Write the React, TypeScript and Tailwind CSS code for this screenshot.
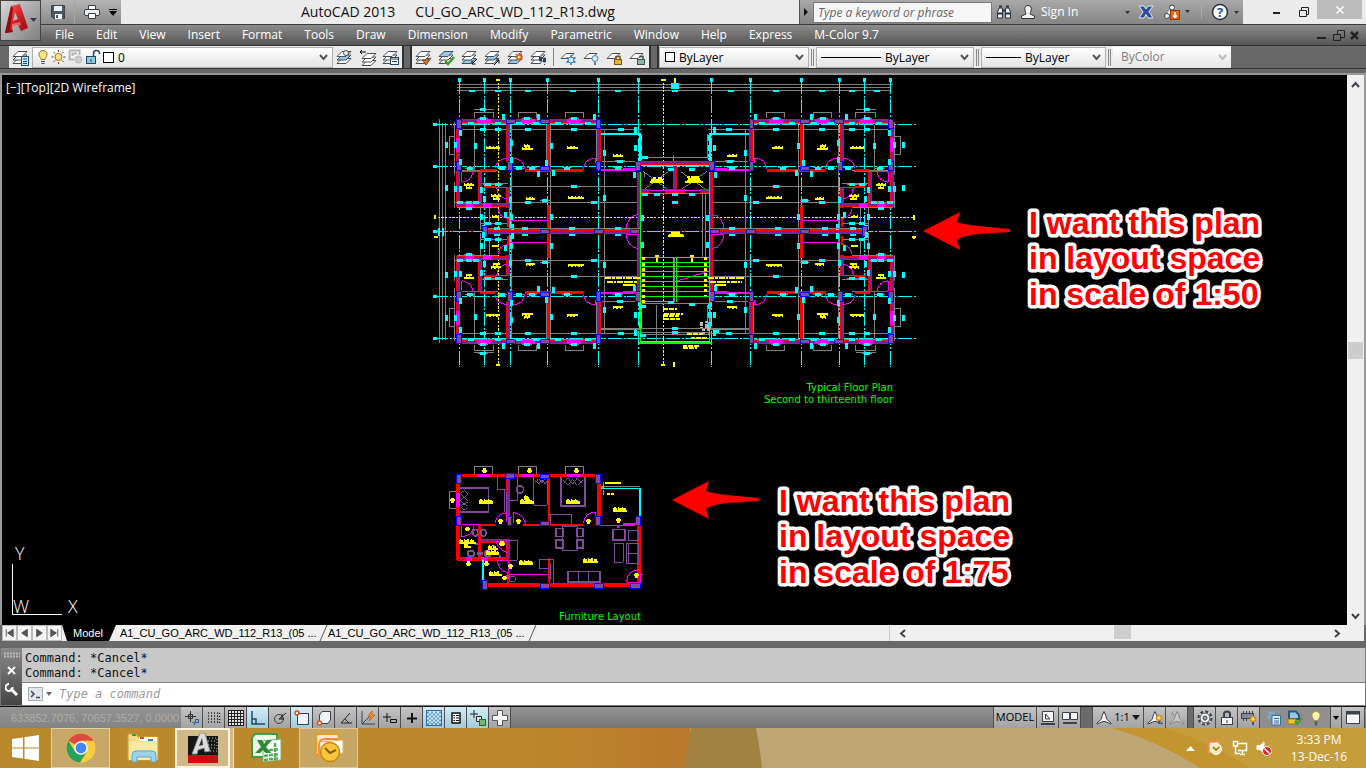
import React from "react";

type P = { children?: React.ReactNode };
type Pt = [number, number];

/* ---------- small icon helpers ---------- */

function Ico({ w = 16, h = 16, children }: P & { w?: number; h?: number }) {
  return (
    <svg width={w} height={h} viewBox={`0 0 ${w} ${h}`} fill="none" stroke="#3b424c" strokeWidth="1" className="shrink-0" aria-hidden="true">
      {children}
    </svg>
  );
}

function Sheets({ top = "#fff", mid = "#fff", low = "#fff", tint = "#4a4f57" }) {
  return (
    <g stroke={tint} strokeWidth="1">
      <path d="M6 9.5H15L10 14.5H1Z" fill={low} />
      <path d="M6 6H15L10 11H1Z" fill={mid} />
      <path d="M6 2.5H15L10 7.5H1Z" fill={top} />
    </g>
  );
}

function Sheet() {
  return <path d="M6 4.5H14L9 9.5H1Z" fill="#fff" stroke="#4a4f57" />;
}

function IcoBtn({ label, children, cls = "w-[23px]" }: P & { label: string; cls?: string }) {
  return (
    <button type="button" aria-label={label} title={label} className={`flex h-full items-center justify-center ${cls}`}>
      {children}
    </button>
  );
}

function Chevron({ color = "#555" }) {
  return (
    <svg width="9" height="7" viewBox="0 0 9 7" fill="none" stroke={color} strokeWidth="2" className="pointer-events-none mr-1 -ml-3 shrink-0" aria-hidden="true">
      <path d="M1 1L4.500 5L8 1" />
    </svg>
  );
}

/* ---------- header ---------- */

function Logo() {
  return (
    <button type="button" aria-label="Application menu" className="flex h-[41px] w-[41px] shrink-0 items-center border border-[#444] bg-gradient-to-br from-[#d8d8d8] via-[#aaa] to-[#808080]">
      <svg width="39" height="39" viewBox="0 0 39 39" aria-hidden="true">
        <defs>
          <linearGradient id="lg" x1="0" y1="0" x2="1" y2="1">
            <stop offset="0" stopColor="#f46a62" />
            <stop offset="0.500" stopColor="#d91f26" />
            <stop offset="1" stopColor="#8f0d12" />
          </linearGradient>
        </defs>
        <path d="M4 32L10 5L19 3L27 27L20 30L17 24L11 26L12 31Z" fill="url(#lg)" />
        <path d="M4 32L10 5L12 7L9 28L12 31Z" fill="#8f0d12" />
        <path d="M12 20L14 11L17 18Z" fill="#bcb0b0" />
        <path d="M11 23L19 21L20 24L11 26Z" fill="#fff" opacity="0.350" />
        <path d="M29 17H36L32.500 21Z" fill="#333b4a" />
      </svg>
    </button>
  );
}

function TitleBar() {
  return (
    <div className="flex h-[24px] items-stretch bg-[#ebebeb]">
      <div className="flex w-[80px] items-center bg-gradient-to-b from-[#b4b4b4] to-[#8a8a8a]">
        <IcoBtn label="Save" cls="w-[34px] border-r border-[#a5a5a5]">
          <Ico>
            <path d="M2 1.500H14.500V14.500H3.500L1.500 12.500V1.500Z" fill="#4d5866" />
            <rect x="4" y="2" width="8" height="5" fill="#e8f0f6" stroke="none" />
            <rect x="5" y="10" width="7" height="5" fill="#fff" stroke="none" />
            <rect x="6" y="11" width="2" height="3" fill="#4d5866" stroke="none" />
          </Ico>
        </IcoBtn>
        <IcoBtn label="Print" cls="w-[34px]">
          <Ico>
            <path d="M4.500 6V1.500H11.500V6" fill="#fff" />
            <rect x="0.500" y="5.500" width="15" height="6" rx="1.500" fill="#eee" />
            <path d="M4.500 9.500H11.500V14.500H4.500Z" fill="#fff" />
          </Ico>
        </IcoBtn>
        <button type="button" aria-label="Customize quick access" className="h-full">
          <svg width="8" height="7" viewBox="0 0 8 7" aria-hidden="true"><path d="M0 0H8V1H0ZM0 2H8L4 7Z" fill="#000" /></svg>
        </button>
      </div>
      <h1 className="flex flex-1 items-center gap-[20px] whitespace-nowrap pl-[180px] text-[14px] leading-6 text-[#111]">
        <span>AutoCAD 2013</span>
        <span>CU_GO_ARC_WD_112_R13.dwg</span>
      </h1>
      <div className="flex w-[444px] shrink-0 items-center border-l border-[#555] bg-gradient-to-b from-[#a8a8a8] to-[#858585]">
        <svg width="13" height="10" viewBox="0 0 13 10" aria-hidden="true"><path d="M4 1V9L8 5Z" fill="#111" /></svg>
        <input aria-label="Search help" placeholder="Type a keyword or phrase" className="h-[21px] w-[179px] border border-[#777] bg-[#f6f6f6] px-1 text-[12px] italic text-black placeholder:text-[#666]" />
        <IcoBtn label="Search" cls="w-[24px]">
          <Ico>
            <path d="M3 4H6.500V14H1.500V8ZM13 4H9.500V14H14.500V8Z" fill="#e6edf2" stroke="#2c333d" />
            <path d="M3 2.500H6M10 2.500H13M6.500 6.500H9.500M2 9.500H6M10 9.500H14" stroke="#2c333d" strokeWidth="2" />
          </Ico>
        </IcoBtn>
        <button type="button" className="flex h-full flex-1 items-center gap-[5px] pl-1 text-[12px] text-white">
          <Ico>
            <path d="M8 1.500C5 1.500 4.500 4 5 6C5.300 8 6 9 6 10L1.500 12V14.500H14.500V12L10 10C10 9 11 8 11.200 6C11.500 4 11 1.500 8 1.500Z" fill="#f2f2f2" stroke="#2c333d" />
          </Ico>
          <span className="flex-1 text-left">Sign In</span>
          <svg width="5" height="5" viewBox="0 0 5 5" aria-hidden="true"><path d="M0 1H5L2.500 4Z" fill="#333" /></svg>
        </button>
        <IcoBtn label="Exchange apps" cls="w-[32px]">
          <Ico>
            <path d="M1 2H6L8 5L10 2H15L11 7.500L15 14H10L8 10.500L6 14H1L5 8Z" fill="#2f4f9e" stroke="#dfe6f5" />
          </Ico>
        </IcoBtn>
        <IcoBtn label="Stay connected" cls="w-[20px]">
          <Ico>
            <path d="M8 4L3 12H13" stroke="#fff" strokeWidth="2" />
            <circle cx="8" cy="3.500" r="2.500" fill="#fff" />
            <circle cx="3" cy="12" r="2.500" fill="#fff" />
            <rect x="6.500" y="6.500" width="9" height="9" fill="#e2661a" stroke="#8d3a07" />
            <path d="M11 8V13M9 11.500L11 13.500L13 11.500" stroke="#fff" strokeWidth="1.500" />
          </Ico>
        </IcoBtn>
        <svg width="28" height="16" viewBox="0 0 28 16" aria-hidden="true"><path d="M3 6H8L5.500 9Z" fill="#333" /><path d="M19.500 1V15" stroke="#aaa" /></svg>
        <IcoBtn label="Help" cls="w-[20px]">
          <Ico w={18} h={18}>
            <circle cx="9" cy="9" r="7.500" fill="#fff" stroke="#2c333d" strokeWidth="1.500" />
            <text x="9" y="13.500" textAnchor="middle" fill="#1d4fa0" stroke="none" className="text-[13px] font-bold">?</text>
          </Ico>
        </IcoBtn>
        <svg width="13" height="5" viewBox="0 0 13 5" aria-hidden="true"><path d="M4 1H9L6.500 4Z" fill="#333" /></svg>
      </div>
      <div className="flex w-[123px] shrink-0 items-start">
        <IcoBtn label="Minimize" cls="ml-[20px] w-[28px]"><Ico w={10} h={10}><path d="M1 6H8" stroke="#222" strokeWidth="2" /></Ico></IcoBtn>
        <IcoBtn label="Restore" cls="w-[26px]"><Ico w={11} h={13}><path d="M0.500 4.500H7.500V10.500H0.500ZM2.500 4V1.500H9.500V8.500H8" stroke="#222" /></Ico></IcoBtn>
        <button type="button" aria-label="Close" className="flex h-[19px] w-[45px] items-center justify-center bg-[#bcbcbc]">
          <Ico w={8} h={8}><path d="M0.500 0.500L7.500 7.500M7.500 0.500L0.500 7.500" stroke="#fff" strokeWidth="1.500" /></Ico>
        </button>
      </div>
    </div>
  );
}

const menus = ["File", "Edit", "View", "Insert", "Format", "Tools", "Draw", "Dimension", "Modify", "Parametric", "Window", "Help", "Express", "M-Color 9.7"];

function MenuBar() {
  return (
    <nav className="flex h-[21px] items-center border-t border-[#3c3c3c] bg-gradient-to-b from-[#8d8d8d] to-[#555] pr-1 pl-[14px]">
      <div className="flex flex-1 items-center gap-[22px] text-[12px] leading-5 text-white">
        {menus.map((m) => <button type="button" key={m}>{m}</button>)}
      </div>
      <IcoBtn label="Minimize drawing" cls="w-[17px]"><Ico w={10} h={10}><path d="M0 8H9" stroke="#222" strokeWidth="2" /></Ico></IcoBtn>
      <IcoBtn label="Restore drawing" cls="w-[17px]"><Ico w={12} h={11}><path d="M0.500 4.500H7.500V10.500H0.500ZM4.500 4V0.500H11.500V7.500H8" stroke="#222" /></Ico></IcoBtn>
      <IcoBtn label="Close drawing" cls="w-[15px]"><Ico w={9} h={9}><path d="M1 1L8 8M8 1L1 8" stroke="#222" strokeWidth="2.500" /></Ico></IcoBtn>
    </nav>
  );
}

function Grip() {
  return <div className="h-full w-[10px] border-x-2 border-[#333] bg-[#686868]" />;
}

function DoubleRule() {
  return <div className="mx-[2px] h-[17px] w-[3px] border-x border-[#888]" />;
}

function Combo({ label, value, cls, icon, dim = false }: { label: string; value: string; cls: string; icon?: React.ReactNode; dim?: boolean }) {
  return (
    <div className={`flex h-[21px] shrink-0 items-center border border-[#b0b0b0] bg-gradient-to-b from-white to-[#e4e4e4] pl-1 ${cls}`}>
      {icon}
      <select aria-label={label} disabled={dim} className={`h-full min-w-0 flex-1 appearance-none bg-transparent pl-1 text-[12px] leading-5 ${dim ? "text-[#808080]" : "text-black"}`}>
        <option>{value}</option>
      </select>
      <Chevron color={dim ? "#bbb" : "#555"} />
    </div>
  );
}

function Swatch() {
  return <span className="ml-px h-[10px] w-[10px] shrink-0 border border-black bg-white" />;
}

function Toolbars() {
  return (
    <div className="flex h-[24px] items-center border-y border-[#333] bg-[#686868] pl-[9px]">
      <div className="flex h-full shrink-0 items-center bg-[#ebebeb]">
        <IcoBtn label="Layer properties"><Ico w={17} h={17}><Sheets /><rect x="9.500" y="7.500" width="7" height="9" fill="#cfe6f7" stroke="#1b4f80" /><path d="M11 10H15M11 12.500H15M11 14.500H15" stroke="#1b4f80" /></Ico></IcoBtn>
        <Combo
          label="Layer"
          value="0"
          cls="w-[301px]"
          icon={
            <span className="flex items-center gap-[1px]">
              <Ico w={12} h={16}><path d="M6 1.500C3 1.500 1.500 4 2 6C2.500 8 4 9 4 10.500H8C8 9 9.500 8 10 6C10.500 4 9 1.500 6 1.500Z" fill="#fbe38a" stroke="#98762a" /><path d="M4 12.500H8M4.500 14.500H7.500" stroke="#445" /></Ico>
              <Ico w={17} h={16}><circle cx="8.500" cy="8" r="3.500" fill="#fbe38a" stroke="#a8762a" /><path d="M8.500 1V3M8.500 13V15M1.500 8H3.500M13.500 8H15.500M3.500 3L5 4.500M12 11.500L13.500 13M13.500 3L12 4.500M5 11.500L3.500 13" stroke="#6a4b18" /></Ico>
              <Ico w={15} h={16}><path d="M1.500 1.500H11.500V6M6 10.500H1.500V1.500M4.500 7V4.500H9" stroke="#b4b4b4" strokeWidth="2" /><circle cx="10.500" cy="10.500" r="3.500" fill="#ccc" stroke="#aaa" strokeDasharray="2 1" /></Ico>
              <Ico w={18} h={16}><rect x="2.500" y="7.500" width="9" height="7" fill="#8cc8e0" stroke="#24485e" /><path d="M9.500 7V4.500Q9.500 1.500 12.500 1.500T15.500 5" stroke="#24485e" strokeWidth="1.500" /><path d="M7 10V13" stroke="#24485e" /></Ico>
              <span className="h-[11px] w-[11px] border border-black bg-white" />
            </span>
          }
        />
        <IcoBtn label="Make current"><Ico w={17} h={17}><Sheets mid="#8ec9ee" /><circle cx="10" cy="4" r="2.500" stroke="#555" fill="#eee" /></Ico></IcoBtn>
        <IcoBtn label="Layer previous"><Ico w={17} h={17}><g transform="translate(2 2)"><Sheets /></g><path d="M1 3H7M1 3L3 1M1 3L3 5" stroke="#000" /></Ico></IcoBtn>
        <IcoBtn label="Layer states"><Ico w={17} h={17}><Sheets /><rect x="8.500" y="8.500" width="8" height="7" fill="#fff" stroke="#24485e" /><path d="M8 10H17M10 12.500H15" stroke="#24485e" /></Ico></IcoBtn>
      </div>
      <Grip />
      <div className="flex h-full shrink-0 items-center bg-[#ebebeb]">
        <IcoBtn label="Layer match"><Ico w={17} h={17}><Sheets /><path d="M7 11L11 16L16 9L11 11Z" fill="#c7742c" stroke="#8a4513" /></Ico></IcoBtn>
        <IcoBtn label="Change to current layer"><Ico w={17} h={17}><Sheets top="#8ec9ee" /><path d="M7 12L10 15L16 8" stroke="#3f9e28" strokeWidth="2.500" /></Ico></IcoBtn>
        <IcoBtn label="Copy to layer"><Ico w={17} h={17}><Sheets low="#8ec9ee" /><path d="M16 10L11 15M11 11.500V15H14.500" stroke="#000" /></Ico></IcoBtn>
        <IcoBtn label="Layer walk"><Ico w={17} h={17}><Sheets mid="#8ec9ee" /><path d="M10 16L15 11M11.500 11H15V14.500" stroke="#000" /></Ico></IcoBtn>
        <IcoBtn label="Layer isolate"><Ico w={17} h={17}><Sheets low="#8ec9ee" /><path d="M12 4V12M8 8H16M9 5L15 11M15 5L9 11" stroke="#d5531a" strokeWidth="1.500" /><circle cx="12" cy="8" r="1.500" fill="#ffec8a" stroke="none" /></Ico></IcoBtn>
        <IcoBtn label="Layer unisolate"><Ico w={17} h={17}><Sheets /><path d="M9.500 8H11.500V12H9.500ZM13.500 9H15.500V13H13.500ZM10 14V15M14.500 15V16" fill="#24406b" stroke="#24406b" /></Ico></IcoBtn>
        <div className="mx-[3px] h-[18px] w-px bg-[#888]" />
        <IcoBtn label="Layer freeze"><Ico w={17} h={17}><Sheet /><path d="M11 6V16M6.500 8.500L15.500 13.500M15.500 8.500L6.500 13.500" stroke="#2c79b8" strokeWidth="1.500" /><circle cx="11" cy="11" r="3" fill="#d8effa" stroke="#2c79b8" /></Ico></IcoBtn>
        <IcoBtn label="Layer off"><Ico w={17} h={17}><Sheet /><circle cx="12" cy="9.500" r="3" fill="#cfeafc" stroke="#5b87a3" /><path d="M11 13H13V16H11Z" fill="#5b87a3" stroke="none" /></Ico></IcoBtn>
        <IcoBtn label="Layer lock"><Ico w={17} h={17}><Sheet /><rect x="8.500" y="10.500" width="7" height="5" fill="#e4b43a" stroke="#7a5414" /><path d="M10 10V7.500H14V10" stroke="#7a5414" strokeWidth="1.500" /></Ico></IcoBtn>
        <IcoBtn label="Layer unlock"><Ico w={17} h={17}><Sheet /><rect x="8.500" y="10.500" width="7" height="5" fill="#8fb3a5" stroke="#35564a" /><path d="M14 10V7.500H11V8.500" stroke="#35564a" strokeWidth="1.500" /></Ico></IcoBtn>
      </div>
      <Grip />
      <div className="flex h-full shrink-0 items-center bg-[#ebebeb]">
        <Combo label="Color" value="ByLayer" cls="w-[150px]" icon={<Swatch />} />
        <DoubleRule />
        <Combo label="Linetype" value="ByLayer" cls="w-[158px]" icon={<span className="h-px w-[60px] shrink-0 bg-black" />} />
        <DoubleRule />
        <Combo label="Lineweight" value="ByLayer" cls="w-[125px]" icon={<span className="h-px w-[35px] shrink-0 bg-black" />} />
        <DoubleRule />
        <Combo label="Plot style" value="ByColor" cls="w-[118px] border-0" dim />
      </div>
    </div>
  );
}

/* ---------- drawings: coordinates are thirds of a pixel ---------- */

const GRAY = "#808080";
const CYAN = "#00ffff";
const YEL = "#ffff00";
const MAG = "#ff00ff";

function Wall({ d, w = 12, core = 6 }: { d: string; w?: number; core?: number }) {
  return (
    <>
      <path d={d} stroke="#ff0000" strokeWidth={w} />
      <path d={d} stroke="#7d1f9c" strokeWidth={core} />
    </>
  );
}

function Column({ c, w, h }: { c: Pt; w: number; h: number }) {
  return <rect x={c[0] - w / 2} y={c[1] - h / 2} width={w} height={h} fill="#804b9b" stroke="#0000ff" strokeWidth="3" />;
}

function Label({ x, y, w = 30 }: { x: number; y: number; w?: number }) {
  return (
    <g stroke={YEL}>
      <path d={`M${x - w / 2} ${y}h${w}`} strokeWidth="6" />
      <path d={`M${x - w / 2} ${y - 4}h${w - 6}`} strokeWidth="3" strokeDasharray="4 5 7 4" />
    </g>
  );
}

const hTags: Pt[] = [[158, 130], [292, 130], [432, 130], [124, 145], [205, 145], [268, 145], [318, 145], [385, 145], [475, 145], [160, 163], [203, 163], [295, 163], [431, 163], [572, 163], [120, 281], [215, 279], [268, 281], [307, 279], [410, 279], [563, 279], [570, 258], [431, 335], [175, 328], [205, 328], [160, 104], [90, 382], [116, 382], [138, 382], [295, 382], [492, 382], [345, 377], [118, 399], [175, 446], [205, 446], [202, 477], [285, 477], [427, 477], [563, 477]];
const vTags: Pt[] = [[49, 210], [49, 340], [77, 210], [91, 175], [91, 260], [135, 212], [244, 205], [364, 213], [350, 265], [523, 235], [220, 125], [325, 125], [494, 125], [325, 297], [370, 295], [244, 255], [617, 166], [617, 218], [630, 190], [630, 218], [630, 245], [75, 342], [91, 342], [155, 345], [163, 372], [364, 427], [523, 370], [226, 420], [245, 427], [155, 425], [160, 458], [247, 455], [636, 428], [240, 375], [614, 300]];

const stubs = "M95 163H635M240 334H622M240 382H622M240 382V467M135 150V290M244 150V460M363 150V465M523 165V470M80 398H205M515 259H622M75 140V300M75 320V400M178 400V450M153 400V465M153 325H235M153 446H235M78 288H205M350 150V280M500 150V280M636 177V250M170 477H630M95 145H500M155 290V320";

function Quarter({ balcony = CYAN }: { balcony?: string }) {
  return (
    <g>
      <path d={stubs} stroke={GRAY} strokeWidth="3" />
      <path d="M133 130V112H192V130M265 130V112H320V130M407 130V112H461V130M75 184H58V238H75M132 105H192" stroke={GRAY} strokeWidth="3" />
      <Wall d="M80 137H510M83 135V395M78 391H240M149 288V392M235 148V262M235 335V400M508 150V262M170 469H630M627 290V470" />
      <path d="M356 148V275M285 286H460M150 286H195M163 336H198M356 390V465" stroke="#ff0000" strokeWidth="8" />
      <path d="M235 430V455" stroke="#ff0000" strokeWidth="6" />
      <path d="M140 137H182M272 137H314M411 137H453M83 190V232M105 391H128M158 391H182" stroke={MAG} strokeWidth="12" />
      <path d="M512 285H615" stroke={MAG} strokeWidth="5" />
      <path d="M580 285H615" stroke={MAG} strokeWidth="9" />
      <path d="M240 436H355M195 280Q198 252 232 250M285 282Q280 250 248 250M460 282Q464 250 497 250V265M95 290V322Q126 318 128 290M198 290H95M232 337H200Q202 368 232 372M205 402Q208 428 232 430M232 337H205M589 460Q590 424 625 418M589 460H628" stroke={MAG} strokeWidth="3" />
      <path d="M512 177H632M630 177V258" stroke={balcony} strokeWidth="5" />
      {[[87, 147], [505, 147], [87, 274], [240, 274], [505, 274], [624, 274], [165, 469]].map(([x, y]) => <Column key={`${x}-${y}`} c={[x, y]} w={13} h={28} />)}
      {[[242, 140], [344, 140], [345, 281], [346, 469], [507, 469], [616, 469]].map(([x, y]) => <Column key={`${x}-${y}`} c={[x, y]} w={27} h={13} />)}
      {hTags.map(([x, y], i) => (
        <g key={i}>
          <path d={`M${x - 15} ${y}h30`} stroke={GRAY} strokeWidth="3" />
          <rect x={x - 9} y={y - 4} width="18" height="9" fill={CYAN} />
        </g>
      ))}
      {vTags.map(([x, y], i) => <rect key={i} x={x - 4} y={y - 9} width="9" height="18" fill={CYAN} />)}
      <Label x={189} y={219} w={42} />
      <Label x={292} y={221} w={34} />
      <Label x={290} y={213} w={18} />
      <Label x={427} y={219} w={34} />
      <Label x={564} y={243} w={30} />
      <Label x={117} y={331} w={32} />
      <Label x={117} y={338} w={20} />
      <Label x={198} y={362} w={30} />
      <Label x={200} y={371} w={22} />
      <Label x={301} y={372} w={28} />
      <Label x={438} y={368} w={48} />
      <Label x={196} y={427} w={22} />
    </g>
  );
}

const gridX = [88, 163, 241, 352, 505, 625, 844, 961, 1114, 1228, 1303, 1381];
const gridY = [148, 274, 469, 664, 790];

function FloorPlan() {
  return (
    <g transform="translate(430 75) scale(0.333333)" fill="none" shapeRendering="crispEdges">
      <path d="M82 28H1390M82 38H1384M82 47H1384M28 133V805M37 145V795M48 145V795" stroke={GRAY} strokeWidth="3" />
      {gridX.map((x) => <path key={x} d={`M${x} 15V876`} stroke={CYAN} strokeWidth="3" strokeDasharray="42 5 6 5" />)}
      {gridY.map((y) => <path key={y} d={`M12 ${y}H1458`} stroke={CYAN} strokeWidth="3" strokeDasharray="42 5 6 5" />)}
      <path d="M205 12V872M700 12V872M12 427H1452" stroke={YEL} strokeWidth="3" strokeDasharray="7 4" />
      {gridX.map((x) => <rect key={x} x={x - 5} y="10" width="10" height="10" fill={CYAN} />)}
      {gridY.map((y) => <rect key={y} x="10" y={y - 5} width="10" height="10" fill={CYAN} />)}
      <path d="M198 15h12M694 15h14M198 870h12M694 870h12M735 10v15M733 862v13M15 420v13M12 486h12M1452 420v14M1445 487h14M1452 482v10" stroke={YEL} strokeWidth="7" />
      {[126, 205, 295, 429, 565, 735, 903, 1039, 1175, 1266, 1342].map((x) => <rect key={x} x={x - 9} y="45" width="18" height="6" fill={CYAN} />)}
      <rect x="723" y="24" width="24" height="18" fill={CYAN} />
      <path d="M28 460v22M39 460v22" stroke={CYAN} strokeWidth="7" />
      <Quarter />
      <g transform="translate(1470 0) scale(-1 1)"><Quarter /></g>
      <g transform="translate(0 939) scale(1 -1)"><Quarter balcony={GRAY} /></g>
      <g transform="translate(1470 939) scale(-1 -1)"><Quarter balcony={GRAY} /></g>

      {/* lift and stair core */}
      <path d="M632 248H838M632 357H838M645 305V290M640 290L715 345M640 345L715 290M752 290L830 345M752 345L830 290M818 357V546M826 357V546M632 455V540M632 687H838M632 760H838M632 772H838M632 780H838M680 690V800M730 240V290" stroke={GRAY} strokeWidth="3" />
      <Wall d="M630 265H840M735 265V350M628 349H658M706 349H765M810 349H838" />
      <path d="M632 272H838M630 800H840" stroke={CYAN} strokeWidth="4" />
      <path d="M660 347H810M742 618L825 592" stroke={MAG} strokeWidth="3" />
      <path d="M631 290V805M838 290V805M631 547H838M631 562H838M631 576H838M631 590H838M631 604H838M631 619H838M631 634H838M631 649H838M631 664H838M631 679H730" stroke="#00ff00" strokeWidth="3" />
      <path d="M731 547V680M739 547V680" stroke="#00ff00" strokeWidth="4" />
      <path d="M735 547V680" stroke={GRAY} strokeWidth="3" />
      <path d="M628 805H845" stroke="#00ff00" strokeWidth="5" />
      <path d="M640 547V690M828 547V664" stroke={YEL} strokeWidth="9" strokeDasharray="9 7" />
      <path d="M526 608H632M530 620H620M835 608H942M840 620H935" stroke={YEL} strokeWidth="6" strokeDasharray="18 3 8 2" />
      <path d="M578 629h36M855 629h32M674 542h12M682 542v20M780 542h12M785 542v20" stroke={YEL} strokeWidth="6" />
      <path d="M668 310h10m6 0h12M664 316h36M660 321h42M770 306h10m4 0h22M775 313h34M770 318h42M766 322h52M716 479h42M714 484h48M722 475h28" stroke={YEL} strokeWidth="5" />
      <path d="M700 701h40M703 716h55M700 724h46M703 733h50M772 777h50M782 788h50M758 812h50M760 820h42" stroke={YEL} strokeWidth="6" strokeDasharray="14 3" />
      <path d="M815 740v18M830 738v20M822 763v14M837 755v14" stroke="#b8b8b8" strokeWidth="9" strokeDasharray="6 2" />
      {[[645, 248], [645, 358], [680, 358], [735, 358], [735, 382], [787, 358], [722, 283], [787, 283], [735, 760], [735, 772], [722, 683], [787, 688], [638, 782], [640, 694], [857, 770]].map(([x, y], i) => <rect key={i} x={x - 9} y={y - 4} width="18" height="9" fill={CYAN} />)}
    </g>
  );
}

function FurniturePlan() {
  return (
    <g transform="translate(440 460) scale(0.333333)" fill="none" shapeRendering="crispEdges">
      <path d="M103 42V19H157V42M235 42V19H290V42M376 42V19H430V42M50 94H28V146H50M482 80H600" stroke={GRAY} strokeWidth="3" />
      <Wall w={11} core={3} d="M55 47H475M54 47V300M50 298H208M119 195V298M122 243H208M205 50V170M478 50V170M598 195V375M130 376H600M205 243V298" />
      <path d="M327 50V185M250 194H430M122 194H165M327 294V375M205 335V375" stroke="#ff0000" strokeWidth="6" />
      <path d="M110 47H150M243 47H282M381 47H424M54 98V140M78 298H96M124 298H142M205 345V358" stroke={MAG} strokeWidth="11" />
      <path d="M55 195H122M66 195V230Q98 228 102 198M165 190Q170 160 201 158V185M220 190V158Q250 160 257 194M430 190Q434 158 466 157V190M484 196H585M172 302H205V338Q176 334 172 302M208 343H325M168 246Q178 272 204 278M168 246H204M560 366Q562 332 598 328M602 340V368H560M598 343h11" stroke={MAG} strokeWidth="3" />
      <path d="M550 192H585M535 196v8" stroke={MAG} strokeWidth="6" />
      <path d="M484 86H600V170" stroke={CYAN} strokeWidth="5" />
      <path d="M129 300V360" stroke={CYAN} strokeWidth="6" />
      <g stroke="#804b9b" strokeWidth="3">
        <path d="M60 85H146V155H60M172 52V88H205M195 88V157M200 100V157M208 121H233V52M281 52V136H322V52M331 192V163H395V192M367 199H413V271H367ZM298 325V298H340V370M327 325H298M208 241H232V301H208" />
        <path d="M60 83H146M60 156H146" strokeWidth="5" />
        <path d="M362 50V138H436V50M362 138H436" strokeWidth="6" />
        <path d="M349 206H370V230H349ZM349 240H370V265H349ZM410 206H430V230H410ZM410 240H430V265H410Z" strokeWidth="5" />
        <path d="M520 209H556V241H520ZM384 335H480V367H384Z" strokeWidth="5" />
        <path d="M565 211H595V241H565ZM523 250H550V307H523ZM559 250H595V312H559ZM559 280H595M416 335V365M446 335V365M565 250V312M333 310V360M210 350H226V364H210Z" />
        <path d="M62 100L73 91L85 102L73 114ZM62 122L73 111L85 124L73 135ZM62 140L73 130L85 140L73 150ZM286 60L296 72L306 60L316 72L322 60M286 68L296 56L306 68L316 56M370 60L384 76L398 58L412 76L428 60M370 70L384 54L398 72L412 54L428 70" />
        <circle cx="240" cy="88" r="11" strokeWidth="5" />
        <ellipse cx="106" cy="218" rx="7" ry="10" strokeWidth="5" />
        <ellipse cx="130" cy="218" rx="8" ry="10" strokeWidth="5" />
        <circle cx="93" cy="281" r="9" strokeWidth="6" />
        <circle cx="143" cy="281" r="9" strokeWidth="6" />
        <path d="M112 281h16M105 253h9M176 290h8" strokeWidth="7" />
      </g>
      {[[57, 56], [475, 56], [57, 183], [209, 183], [475, 183], [594, 183], [135, 376]].map(([x, y]) => <Column key={`${x}-${y}`} c={[x, y]} w={14} h={27} />)}
      {[[211, 48], [315, 49], [315, 190], [315, 378], [478, 378], [587, 378]].map(([x, y]) => <Column key={`${x}-${y}`} c={[x, y]} w={28} h={13} />)}
      {[[133, 32], [268, 32], [409, 32], [38, 121], [181, 184], [235, 184], [446, 184], [535, 181], [83, 207], [186, 251], [86, 311], [139, 311], [211, 319], [193, 354], [589, 346]].map(([x, y]) => (
        <path key={`${x}-${y}`} d={`M${x - 8} ${y}H${x + 8}M${x - 5} ${y - 4}H${x + 5}M${x - 5} ${y + 4}H${x + 5}`} stroke={YEL} strokeWidth="6" />
      ))}
      {([[139, 124, 42], [261, 124, 40], [260, 112, 16], [399, 124, 40], [541, 149, 42], [259, 307, 42], [452, 303, 46], [158, 277, 40], [158, 264, 30], [166, 342, 38], [82, 246, 50], [82, 258, 20]] as [number, number, number][]).map(([x, y, w]) => (
        <g key={`${x}-${y}`} stroke={YEL}>
          <path d={`M${x - w / 2} ${y + 4}h${w}`} strokeWidth="7" />
          <path d={`M${x - w / 2} ${y - 2}h${w - 4}`} strokeWidth="6" strokeDasharray="12 3 16 2" />
          <path d={`M${x - w / 2 + 3} ${y - 6}h${w - 12}`} strokeWidth="3" strokeDasharray="4 7" />
        </g>
      ))}
      <path d="M496 68h48M500 102h22" stroke={YEL} strokeWidth="6" strokeDasharray="10 2" />
      <path d="M490 80V66M490 90V104M484 84h8" stroke={YEL} strokeWidth="2" />
    </g>
  );
}

function Callout({ x, y, lines }: { x: number; y: number; lines: string[] }) {
  return (
    <g className="font-['Liberation_Sans',sans-serif] text-[32px] font-bold" fill="#ff0000" stroke="#fff" strokeWidth="7" strokeLinejoin="round" paintOrder="stroke">
      {lines.map((l, i) => <text key={l} x={x} y={y + Math.floor(i * 35.5)}>{l}</text>)}
    </g>
  );
}

function Arrow({ at }: { at: Pt }) {
  return <path transform={`translate(${at[0]} ${at[1]})`} d="M0 0L37 -19L34 -9Q38 -7 55 -5L86 -2Q89 -1 86 1L55 3Q38 5 34 9L37 19Z" fill="#ff0000" />;
}

function Canvas() {
  return (
    <main className="relative min-h-[550px] flex-1 overflow-hidden bg-black">
      <svg width="1345" height="550" viewBox="2 75 1345 550" className="absolute top-0 left-0" role="img" aria-label="Model space drawing">
        <FloorPlan />
        <FurniturePlan />
        <g className="font-['DejaVu_Sans',sans-serif] text-[10px]" fill="#00ff00">
          <text x="893" y="391" textAnchor="end">Typical Floor Plan</text>
          <text x="893" y="403" textAnchor="end">Second to thirteenth floor</text>
          <text x="641" y="620" textAnchor="end">Furniture Layout</text>
        </g>
        <Arrow at={[923, 231]} />
        <Arrow at={[672, 500]} />
        <Callout x={1029} y={234} lines={["I want this plan", "in layout space", "in scale of 1:50"]} />
        <Callout x={779} y={512} lines={["I want this plan", "in layout space", "in scale of 1:75"]} />
        <path d="M12.500 564V614.500H62" stroke="#fff" fill="none" />
        <g className="font-['Open_Sans',sans-serif] text-[18px] font-light" fill="#fff">
          <text x="15" y="560">Y</text>
          <text x="68" y="613">X</text>
          <text x="13" y="613">W</text>
        </g>
      </svg>
      <p className="relative mt-[5px] ml-1 text-[12px] leading-4 text-white">[−][Top][2D Wireframe]</p>
    </main>
  );
}

function VScroll() {
  return (
    <div className="flex w-[17px] shrink-0 flex-col items-center justify-between bg-[#f0f0f0]">
      <IcoBtn label="Scroll up" cls="max-h-[18px] w-full"><Ico w={9} h={7}><path d="M1 6L4.500 2L8 6" strokeWidth="2" /></Ico></IcoBtn>
      <div className="h-[17px] w-[15px] bg-[#cdcdcd]" />
      <IcoBtn label="Scroll down" cls="max-h-[17px] w-full"><Ico w={9} h={7}><path d="M1 1L4.500 5L8 1" strokeWidth="2" /></Ico></IcoBtn>
    </div>
  );
}

/* ---------- layout tabs ---------- */

function TabStrip() {
  const nav: [string, string][] = [["First tab", "M3.500 2V10M11 2V10L5 6Z"], ["Previous tab", "M10 2V10L4 6Z"], ["Next tab", "M4 2V10L10 6Z"], ["Last tab", "M10.500 2V10M3 2V10L9 6Z"]];
  const slant = <svg width="9" height="16" viewBox="0 0 9 16" fill="none" stroke="#555" aria-hidden="true"><path d="M1 16L8 0" /></svg>;
  return (
    <div className="mx-[2px] flex h-[16px] items-stretch bg-[#f0f0f0] text-[12px] leading-4">
      {nav.map(([n, d]) => (
        <button type="button" key={n} aria-label={n} className="flex w-[15px] items-center justify-center border border-[#bbb] bg-[#f4f4f4]">
          <svg width="14" height="12" viewBox="0 0 14 12" fill="#555" stroke="#555" aria-hidden="true"><path d={d} /></svg>
        </button>
      ))}
      <button type="button" className="flex items-stretch font-['Liberation_Sans',sans-serif] text-[11px] leading-4">
        <svg width="6" height="16" viewBox="0 0 6 16" aria-hidden="true"><path d="M0 0H6V16H5Z" fill="#000" /></svg>
        <span className="w-[40px] bg-black text-center text-white">Model</span>
        <svg width="8" height="16" viewBox="0 0 8 16" aria-hidden="true"><path d="M0 0H8L1 16H0Z" fill="#000" /></svg>
      </button>
      {["a", "b"].map((k) => (
        <button type="button" key={k} className="flex items-center text-black">
          <span className={`whitespace-nowrap text-left font-['Liberation_Sans',sans-serif] text-[11px] leading-4 ${k === "a" ? "w-[203px] pl-1" : "w-[200px]"}`}>A1_CU_GO_ARC_WD_112_R13_(05 ...</span>
          {slant}
        </button>
      ))}
      <div className="ml-auto flex w-[475px] items-center border-l border-[#ccc] pr-[20px]">
        <IcoBtn label="Scroll left" cls="w-[25px]"><Ico w={7} h={9}><path d="M6 1L2 4.500L6 8" strokeWidth="2" /></Ico></IcoBtn>
        <div className="flex h-full flex-1 justify-center"><div className="h-[14px] w-[17px] bg-[#cdcdcd]" /></div>
        <IcoBtn label="Scroll right" cls="w-[14px]"><Ico w={7} h={9}><path d="M1 1L5 4.500L1 8" strokeWidth="2" /></Ico></IcoBtn>
      </div>
    </div>
  );
}

/* ---------- command window ---------- */

function CommandWindow() {
  return (
    <section className="flex h-[58px] border-x border-b border-[#777] font-['DejaVu_Sans_Mono',monospace] text-[12px]">
      <div className="flex w-[21px] shrink-0 flex-col items-center bg-gradient-to-b from-[#8a8a8a] to-[#454545]">
        <svg width="17" height="13" viewBox="0 0 17 13" aria-hidden="true"><path d="M1 5.500H17M1 8.500H17" stroke="#bbb" strokeWidth="2" strokeDasharray="2 1" /></svg>
        <button type="button" aria-label="Close command window" className="flex h-[18px] items-center"><Ico w={9} h={9}><path d="M1 1L8 8M8 1L1 8" stroke="#fff" strokeWidth="2" /></Ico></button>
        <button type="button" aria-label="Customize" className="mt-1"><Ico w={14} h={14}><path d="M5.500 5.500L12 12" stroke="#fff" strokeWidth="3" /><path d="M4 1A3.500 3.500 0 1 0 7.500 4" stroke="#fff" strokeWidth="2" /></Ico></button>
      </div>
      <div className="flex min-w-0 flex-1 flex-col">
        <div className="h-[35px] border-b border-[#808080] bg-[#c8c8c8] pt-[3px] pl-[3px] leading-[15px] text-[#111]">
          <p>Command: *Cancel*</p>
          <p>Command: *Cancel*</p>
        </div>
        <label className="flex flex-1 items-center bg-white pl-[6px]">
          <Ico w={15} h={14}><rect x="0.500" y="0.500" width="14" height="13" fill="#e4e8ee" stroke="#a4acb6" /><path d="M3 4L6 7L3 10M8 10.500H12" stroke="#445" strokeWidth="1.500" /></Ico>
          <svg width="11" height="5" viewBox="0 0 11 5" aria-hidden="true"><path d="M3 0H9L6 4Z" fill="#666" /></svg>
          <input aria-label="Command" placeholder="Type a command" className="ml-[5px] min-w-0 flex-1 bg-transparent italic outline-none placeholder:text-[#999]" />
        </label>
      </div>
    </section>
  );
}

/* ---------- status bar ---------- */

const modes: { name: string; on?: boolean; art: React.ReactNode }[] = [
  { name: "Infer constraints", art: <><path d="M6.500 1V12M1 6.500H12M4.500 4.500H8.500V8.500H4.500Z" stroke="#333" /><path d="M10.500 15V12.500H8.500M11.500 9.500H14.500V12.500H11.500Z" stroke="#1f5fa8" /></> },
  { name: "Snap mode", art: <path d="M2 3H12M2 6H12M2 9H12M2 12H12M13.500 3V13" stroke="#222" strokeDasharray="1 2" strokeWidth="1.500" /> },
  { name: "Grid display", art: <><rect x="0.500" y="0.500" width="15" height="15" fill="#e4e4e4" stroke="#222" /><path d="M3.500 1V15M6.500 1V15M9.500 1V15M12.500 1V15M1 3.500H15M1 6.500H15M1 9.500H15M1 12.500H15" stroke="#222" /></> },
  { name: "Ortho mode", on: true, art: <path d="M2 1V14H15M2 9H6V14" stroke="#1f4a66" strokeWidth="1.500" /> },
  { name: "Polar tracking", art: <><circle cx="7" cy="9" r="4.500" /><path d="M7 9L14 3M7 9H12M10 4V9" stroke="#222" /></> },
  { name: "Object snap", on: true, art: <><rect x="3.500" y="3.500" width="11" height="11" fill="#eef4fa" /><circle cx="3" cy="3" r="2" fill="#fff" stroke="#d8511a" strokeWidth="1.500" /></> },
  { name: "3D object snap", art: <><path d="M3.500 5L6 1.500H14.500V10L12 13.500H3.500Z" fill="#eef4fa" /><circle cx="3.500" cy="13" r="2" fill="#fff" stroke="#d8511a" strokeWidth="1.500" /></> },
  { name: "Object snap tracking", art: <path d="M12 3L3 13H14M7 9L11 13" stroke="#222" /> },
  { name: "Dynamic UCS", art: <><path d="M2 1V14H15M2 14L9 7" stroke="#345" /><path d="M12 1L8 6H11L9 11L15 5H12Z" fill="#f59a23" stroke="#c8641a" /></> },
  { name: "Dynamic input", art: <path d="M5 3V12M1 7H9M8.500 9.500H14.500V12.500H8.500Z" stroke="#111" /> },
  { name: "Line weight", art: <path d="M8 3V13M3 8.500H13" stroke="#111" strokeWidth="2" /> },
  { name: "Transparency", on: true, art: <><rect x="0.500" y="0.500" width="15" height="15" fill="#d9ecfa" stroke="#2b6cb0" /><path d="M1 2.500H15M1 6.500H15M1 10.500H15M1 14H15" stroke="#5d9bd5" strokeWidth="2" strokeDasharray="2 2" /><path d="M3 4.500H15M3 8.500H15M3 12.500H15" stroke="#5d9bd5" strokeWidth="2" strokeDasharray="2 2" /></> },
  { name: "Quick properties", on: true, art: <><rect x="4" y="3" width="8" height="10" fill="#fff" stroke="#111" strokeWidth="1.500" /><path d="M5.500 5.500H7M8 5.500H11M5.500 8H7M8 8H11M5.500 10.500H7M8 10.500H11" stroke="#111" /></> },
  { name: "Selection cycling", on: true, art: <><path d="M4 0V8M0 4H8" stroke="#222" /><path d="M6.500 6.500H11.500V11.500H6.500Z" fill="#eef" stroke="#222" /><rect x="9.500" y="9.500" width="6" height="6" fill="#78b867" stroke="#2c6a20" /></> },
  { name: "Annotation monitor", art: <path d="M5.500 0.500H10.500V5.500H15.500V10.500H10.500V15.500H5.500V10.500H0.500V5.500H5.500Z" fill="#f4f4f4" stroke="#555" /> },
];

const btn = "flex h-full items-center justify-center border-r border-[#4d4d4d] bg-gradient-to-b from-[#c4c4c4] to-[#a2a2a2]";
const person = "M8 1.500L10 6L10.500 9L15 13V14L9 11.500H7L1 14V13L5.500 9L6 6Z";

function StatusBar() {
  return (
    <div className="flex h-[22px] items-stretch border-t border-[#111] bg-gradient-to-b from-[#959595] to-[#757575]">
      <div className="w-[181px] whitespace-nowrap bg-gradient-to-b from-[#969696] to-[#828282] pl-[11px] font-['Liberation_Sans',sans-serif] text-[11px] leading-[22px] text-[#adadad]">633852.7076, 70657.3527, 0.0000</div>
      {modes.map((m) => (
        <button type="button" key={m.name} aria-label={m.name} aria-pressed={!!m.on} className={`flex w-[22px] items-center justify-center border-r border-[#4d4d4d] bg-gradient-to-b ${m.on ? "from-[#d6edf5] to-[#9fcbdc]" : "from-[#c4c4c4] to-[#a2a2a2]"}`}>
          <Ico>{m.art}</Ico>
        </button>
      ))}
      <div className="ml-auto flex text-[11px] text-black">
        <button type="button" className={`${btn} w-[44px] border-l`}>MODEL</button>
        <button type="button" aria-label="Layout" className={`${btn} w-[22px]`}><Ico><path d="M2.500 1.500H13.500V11.500H2.500Z" fill="#f6f6f6" /><path d="M5.500 4V9H10Z" /><path d="M1 14H15" strokeWidth="2" /></Ico></button>
        <button type="button" aria-label="Quick view" className={`${btn} w-[22px]`}><Ico><path d="M0.500 2.500H7.500V9.500H0.500ZM8.500 2.500H15.500V9.500H8.500Z" fill="#f6f6f6" /><path d="M1 13H15" strokeWidth="2" /></Ico></button>
        <div className="w-[12px] border-r border-[#4d4d4d] bg-[#6a6a6a]" />
        <button type="button" className={`${btn} w-[51px] gap-[2px]`}><Ico><path d={person} fill="#f4f4f4" /></Ico>1:1<svg width="8" height="5" viewBox="0 0 8 5" aria-hidden="true"><path d="M0 0H8L4 5Z" fill="#111" /></svg></button>
        <button type="button" aria-label="Annotation visibility" className={`${btn} w-[22px]`}><Ico><path d={person} fill="#f4f4f4" /><circle cx="12" cy="8" r="2.500" fill="#ffe680" stroke="#d98820" strokeWidth="1.500" /><path d="M12 11V14" stroke="#345a7a" strokeWidth="2" /></Ico></button>
        <button type="button" aria-label="Auto scale" className={`${btn} w-[22px]`}><Ico><path d={person} fill="#c8c8c8" stroke="#888" /><path d="M5 1L2 4H5L3 7" stroke="#999" /></Ico></button>
        <div className="w-[6px] border-r border-[#4d4d4d] bg-[#6a6a6a]" />
        <button type="button" aria-label="Workspace" className={`${btn} w-[22px]`}><Ico><circle cx="8" cy="8" r="6.500" fill="#f4f4f4" strokeWidth="2" strokeDasharray="3 2" /><circle cx="8" cy="8" r="5" fill="#f4f4f4" /><circle cx="8" cy="8" r="2" fill="#aaa" /></Ico></button>
        <button type="button" aria-label="Lock interface" className={`${btn} w-[22px]`}><Ico><rect x="2.500" y="7.500" width="11" height="7" fill="#f4f4f4" /><path d="M5 7V4Q5 1.500 8 1.500T11 4V7" strokeWidth="2" /><path d="M8 10V13" /></Ico></button>
        <button type="button" aria-label="Hardware acceleration" className={`${btn} w-[22px]`}><Ico><rect x="0.500" y="3.500" width="12" height="5" fill="#7e8c9a" /><path d="M2.500 1V3M5.500 1V3M8.500 1V3M11.500 1V3M2.500 9V11M5.500 9V11" /><circle cx="12" cy="9" r="2.500" fill="#ffe680" stroke="#d98820" strokeWidth="1.500" /><path d="M12 12V15" stroke="#345a7a" strokeWidth="2" /></Ico></button>
        <div className="flex w-[71px] items-center justify-around border-r border-[#4d4d4d] bg-[#8f8f8f] px-1">
          <Ico><path d="M2 3H9M1 7H7" stroke="#7ba7c8" strokeWidth="3" /><path d="M6 5.500H14.500V15H6Z" fill="#dcebfa" stroke="#3d6b9a" /><path d="M8 8.500H13M8 11H13M8 13H13" stroke="#3d6b9a" /></Ico>
          <Ico><path d="M2 1.500H9L12 5V9H2Z" fill="#9fc6e6" stroke="#28587f" strokeWidth="2" /><path d="M1 9H9V14H1Z" fill="#f3c42c" stroke="#a87a0d" /><path d="M8 11L10.500 14L15 8" stroke="#34a526" strokeWidth="2" /></Ico>
          <Ico><path d="M8 1.500C5 1.500 3.500 4 4 6C4.500 8 6 9 6 10.500H10C10 9 11.500 8 12 6C12.500 4 11 1.500 8 1.500Z" fill="#fff3b8" stroke="#b89642" /><path d="M6.500 12.500H9.500M7 14.500H9" stroke="#556" strokeWidth="2" /></Ico>
        </div>
        <button type="button" aria-label="Status bar menu" className={`${btn} w-[11px]`}><svg width="6" height="4" viewBox="0 0 6 4" aria-hidden="true"><path d="M0 0H6L3 4Z" fill="#000" /></svg></button>
        <button type="button" aria-label="Clean screen" className={`${btn} mr-[1px] w-[23px]`}><Ico><rect x="1.500" y="1.500" width="13" height="12" fill="#fafafa" /><path d="M1 3H15" strokeWidth="3" /></Ico></button>
      </div>
    </div>
  );
}

/* ---------- taskbar ---------- */

function OutlookArt({ size }: { size: number }) {
  return (
    <svg width={size} height={size} viewBox="0 0 30 30" aria-hidden="true">
      <rect x="2" y="1" width="23" height="21" rx="3" fill="#fbe9cf" stroke="#f29a1f" strokeWidth="2" />
      <path d="M5 22V12Q5 6 12 6H24" fill="none" stroke="#ef8a3c" strokeWidth="2" />
      <path d="M6 9L29 7V20L6 23Z" fill="#fff" stroke="#e0b36a" />
      <circle cx="16" cy="19" r="9.500" fill="#f6c63a" stroke="#c68a12" strokeWidth="1.500" />
      <path d="M11 15L16 20L22 17" fill="none" stroke="#8a5a10" strokeWidth="2" />
    </svg>
  );
}

function OutlookTray() {
  return (
    <Ico>
      <path d="M1.500 14V4Q1.500 1.500 4 1.500H13" stroke="#ef8a3c" strokeWidth="2" fill="#fbe3cf" />
      <circle cx="9" cy="9" r="5.500" fill="#fbe9b8" stroke="#fff" />
      <path d="M6 7L9 10L12.500 7" stroke="#a06a14" strokeWidth="1.500" />
    </Ico>
  );
}

function Wallpaper() {
  return (
    <svg className="absolute inset-0 h-full w-full" viewBox="0 0 1366 40" preserveAspectRatio="none" aria-hidden="true">
      <defs>
        <linearGradient id="gold" x1="0" y1="0" x2="1" y2="0">
          <stop offset="0" stopColor="#b98a2c" />
          <stop offset="0.750" stopColor="#bb892b" />
          <stop offset="1" stopColor="#b8782b" />
        </linearGradient>
      </defs>
      <rect width="1366" height="40" fill="#bea775" />
      <rect width="690" height="40" fill="url(#gold)" />
      <path d="M691 0H756Q760 20 762 40H684Z" fill="#a1823f" />
      <path d="M1112 0Q1160 14 1200 40H1366V0Z" fill="#c2952f" />
      <path d="M1165 0Q1210 14 1250 40H1366V0Z" fill="#c59d3b" />
    </svg>
  );
}

function Taskbar() {
  return (
    <footer className="relative flex h-[40px] items-stretch">
      <Wallpaper />
      <div className="relative flex min-w-0 flex-1 items-stretch">
        <button type="button" aria-label="Start" className="flex w-[51px] items-center justify-center">
          <svg width="27" height="26" viewBox="0 0 27 26" fill="#fff" aria-hidden="true"><path d="M0 4L11 2.500V12.500H0ZM12.500 2.300L27 0V12.500H12.500ZM0 13.500H11V23.500L0 22ZM12.500 13.500H27V26L12.500 23.700Z" /></svg>
        </button>
        <button type="button" aria-label="Chrome" className="flex w-[59px] items-center justify-center border border-[#e0cfa5] bg-[#c8a866]">
          <svg width="30" height="30" viewBox="0 0 30 30" aria-hidden="true">
            <circle cx="15" cy="15" r="14.500" fill="#fccd3c" />
            <path d="M15 15L2.500 7.700A14.500 14.500 0 0 1 27.500 7.700H15Z" fill="#dd4b3e" />
            <path d="M2.500 7.700A14.500 14.500 0 0 0 14 29.500L21 18.500L15 15L9 18.500Z" fill="#28a15c" />
            <circle cx="15" cy="15" r="6.800" fill="#fff" />
            <circle cx="15" cy="15" r="5.400" fill="#4487f2" />
          </svg>
        </button>
        <button type="button" aria-label="File Explorer" className="flex w-[65px] items-center justify-center">
          <svg width="32" height="30" viewBox="0 0 32 30" aria-hidden="true">
            <path d="M1 1H9L11 4H31V27H1Z" fill="#f3dd86" stroke="#c9a63e" />
            <path d="M12 4H30V8H12Z" fill="#fff" />
            <path d="M5 2h4" stroke="#3a9b3e" strokeWidth="2" /><path d="M13 5h4" stroke="#d0443a" strokeWidth="2" /><path d="M21 7h5" stroke="#3b7fc4" strokeWidth="2" />
            <path d="M2 9H30V27H2Z" fill="#f8e9a4" />
            <path d="M5 29V22Q5 18 9 18H25Q29 18 29 22V29H24V24H10V29Z" fill="#9ed2ec" stroke="#5ba4cc" />
          </svg>
        </button>
        <button type="button" aria-label="AutoCAD" className="flex w-[55px] items-center justify-center border-2 border-[#fff5dc] bg-[#d0b888]">
          <svg width="30" height="30" viewBox="0 0 30 30" aria-hidden="true">
            <rect x="0" y="3" width="30" height="27" fill="#161616" />
            <path d="M18 5H29V18H19M20 8H28M20 12H28M20 15H28" stroke="#888" strokeWidth="1.500" strokeDasharray="1 2" fill="none" />
            <rect x="0" y="22" width="30" height="8" fill="#d20a11" />
            <path d="M4 21L12 0L17 0L22 18L17 19L16 15L10 17L9 21Z" fill="#dcdcdc" stroke="#888" />
            <path d="M11 13L14 5L15 12Z" fill="#333" />
          </svg>
        </button>
        <div className="w-[4px] border-r border-[#f0e0b8] bg-[#d0b888]" />
        <button type="button" aria-label="Excel" className="flex w-[65px] items-center justify-center">
          <svg width="31" height="30" viewBox="0 0 31 30" aria-hidden="true">
            <path d="M4 1H26V24H1V5Z" fill="#eef6ea" stroke="#3f9e43" strokeWidth="2" />
            <path d="M12 8L30 6V27L12 29Z" fill="#fff" stroke="#73b26e" />
            <path d="M13 23L28 21M13 27L28 25M24 10V27M13 18L28 16" stroke="#55a957" strokeWidth="2.500" strokeDasharray="4 1" />
            <path d="M6 7H11L13 11L16 7H21L15 14L20 20H15L12 17L9 20H4L10 14Z" fill="#2c8a37" />
          </svg>
        </button>
        <button type="button" aria-label="Outlook" className="flex w-[59px] items-center justify-center border border-[#dcc79a] bg-[#c6a661]"><OutlookArt size={30} /></button>
        <div className="ml-auto flex items-center text-white">
          <button type="button" aria-label="Show hidden icons" className="mr-[12px]"><svg width="9" height="5" viewBox="0 0 9 5" aria-hidden="true"><path d="M0 5L4.500 0L9 5Z" fill="#fff" /></svg></button>
          <span className="mr-[9px]"><OutlookTray /></span>
          <span className="mr-[8px]"><Ico><path d="M5.500 3.500H14.500V10.500H6M8 14.500H13M10.500 11V14M1.500 1.500H5.500V6H1.500ZM3.500 6V13.500H8" stroke="#fff" strokeWidth="1.500" /></Ico></span>
          <Ico><path d="M1 5.500H4L8 2V13L4 9.500H1Z" fill="#fff" stroke="#fff" /><circle cx="11" cy="11" r="4.500" fill="#e02525" stroke="#fff" /><path d="M8.500 8.500L13.500 13.500" stroke="#fff" strokeWidth="1.500" /></Ico>
          <div className="mr-[18px] ml-[18px] w-[58px] shrink-0 text-center text-[12px] leading-[17px] whitespace-nowrap">
            <div>3:33 PM</div>
            <div>13-Dec-16</div>
          </div>
        </div>
      </div>
    </footer>
  );
}

export default function App() {
  return (
    <div className="flex min-h-screen flex-col bg-[#686868] font-['Open_Sans','Noto_Sans',sans-serif]">
      <header className="flex bg-[#5a5a5a]">
        <Logo />
        <div className="min-w-0 flex-1">
          <TitleBar />
          <MenuBar />
        </div>
      </header>
      <Toolbars />
      <div className="mt-[4px] flex flex-1 items-stretch border-t-2 border-x-2 border-[#999]">
        <Canvas />
        <VScroll />
      </div>
      <TabStrip />
      <div className="h-[7px]" />
      <CommandWindow />
      <StatusBar />
      <Taskbar />
    </div>
  );
}
